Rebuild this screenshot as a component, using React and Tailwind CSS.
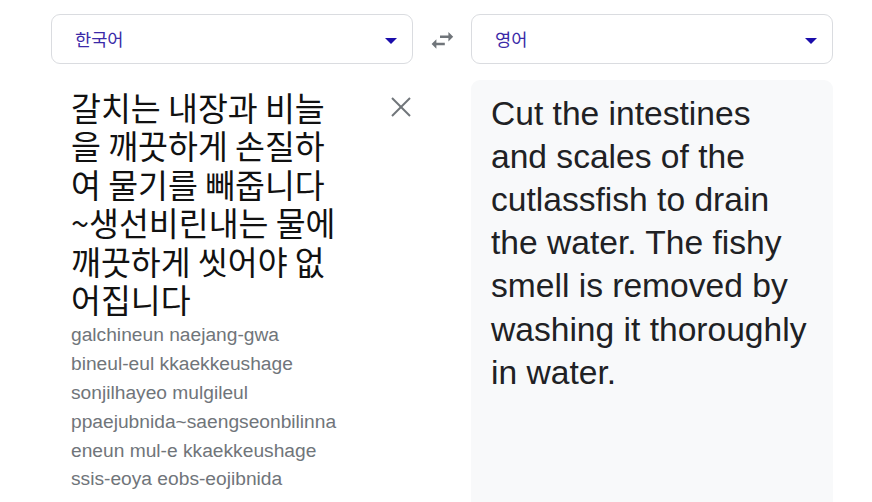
import React from "react";

const ko = { fontFamily: '"Noto Sans CJK KR", "Liberation Sans", sans-serif' };
const ar = { fontFamily: '"Liberation Sans", Arial, sans-serif' };

function Select({ label }) {
  return (
    <div className="h-[50px] rounded-[9px] border border-[#dadce0] flex items-center justify-between pl-[23px] pr-[15px] bg-white">
      <span className="text-[17.6px] text-[#3b2aa8] leading-none" style={ko}>
        {label}
      </span>
      <svg width="12" height="6" viewBox="0 0 12 6" className="mt-[3px]">
        <polygon points="0,0 12,0 6,6" fill="#1a0dab" />
      </svg>
    </div>
  );
}

export default function App() {
  const koLines = [
    "갈치는 내장과 비늘",
    "을 깨끗하게 손질하",
    "여 물기를 빼줍니다",
    "~생선비린내는 물에",
    "깨끗하게 씻어야 없",
    "어집니다",
  ];
  const roman = [
    "galchineun naejang-gwa",
    "bineul-eul kkaekkeushage",
    "sonjilhayeo mulgileul",
    "ppaejubnida~saengseonbilinna",
    "eneun mul-e kkaekkeushage",
    "ssis-eoya eobs-eojibnida",
  ];
  const en = [
    "Cut the intestines",
    "and scales of the",
    "cutlassfish to drain",
    "the water. The fishy",
    "smell is removed by",
    "washing it thoroughly",
    "in water.",
  ];
  return (
    <div className="w-[872px] h-[502px] overflow-hidden bg-white pl-[51px] pt-[14px]">
      <div className="flex h-full">
        <div className="w-[362px] flex flex-col">
          <Select label="한국어" />
          <div className="mt-[16px] flex">
            <div className="flex-1 pl-[20px] pt-[8px]">
              <div className="text-[32.5px] leading-[38.4px] text-[#111]" style={ko}>
                {koLines.map((l, i) => (
                  <div key={i} className="whitespace-pre">{l}</div>
                ))}
              </div>
              <div className="mt-[3px] text-[19.2px] leading-[28.8px] text-[#70757a]" style={ar}>
                {roman.map((l, i) => (
                  <div key={i} className="whitespace-pre">{l}</div>
                ))}
              </div>
            </div>
            <svg width="20" height="20" viewBox="0 0 20 20" className="mt-[16.5px] mr-[2px] shrink-0">
              <line x1="1" y1="1" x2="19" y2="19" stroke="#70757a" strokeWidth="2" />
              <line x1="19" y1="1" x2="1" y2="19" stroke="#70757a" strokeWidth="2" />
            </svg>
          </div>
        </div>
        <div className="w-[58px] flex justify-center">
          <svg width="28.8" height="28.8" viewBox="0 0 24 24" className="mt-[12px]">
            <path
              d="M6.99 11L3 15l3.99 4v-3H14v-2H6.99v-3zM21 9l-3.99-4v3H10v2h7.01v3L21 9z"
              fill="#70757a"
            />
          </svg>
        </div>
        <div className="w-[362px] flex flex-col">
          <Select label="영어" />
          <div className="mt-[16px] flex-1 bg-[#f8f9fa] rounded-t-[9px] pl-[20px] pt-[11.5px]">
            <div className="text-[33.6px] leading-[43.2px] text-[#202124]" style={ar}>
              {en.map((l, i) => (
                <div key={i} className="whitespace-pre">{l}</div>
              ))}
            </div>
          </div>
        </div>
      </div>
    </div>
  );
}
